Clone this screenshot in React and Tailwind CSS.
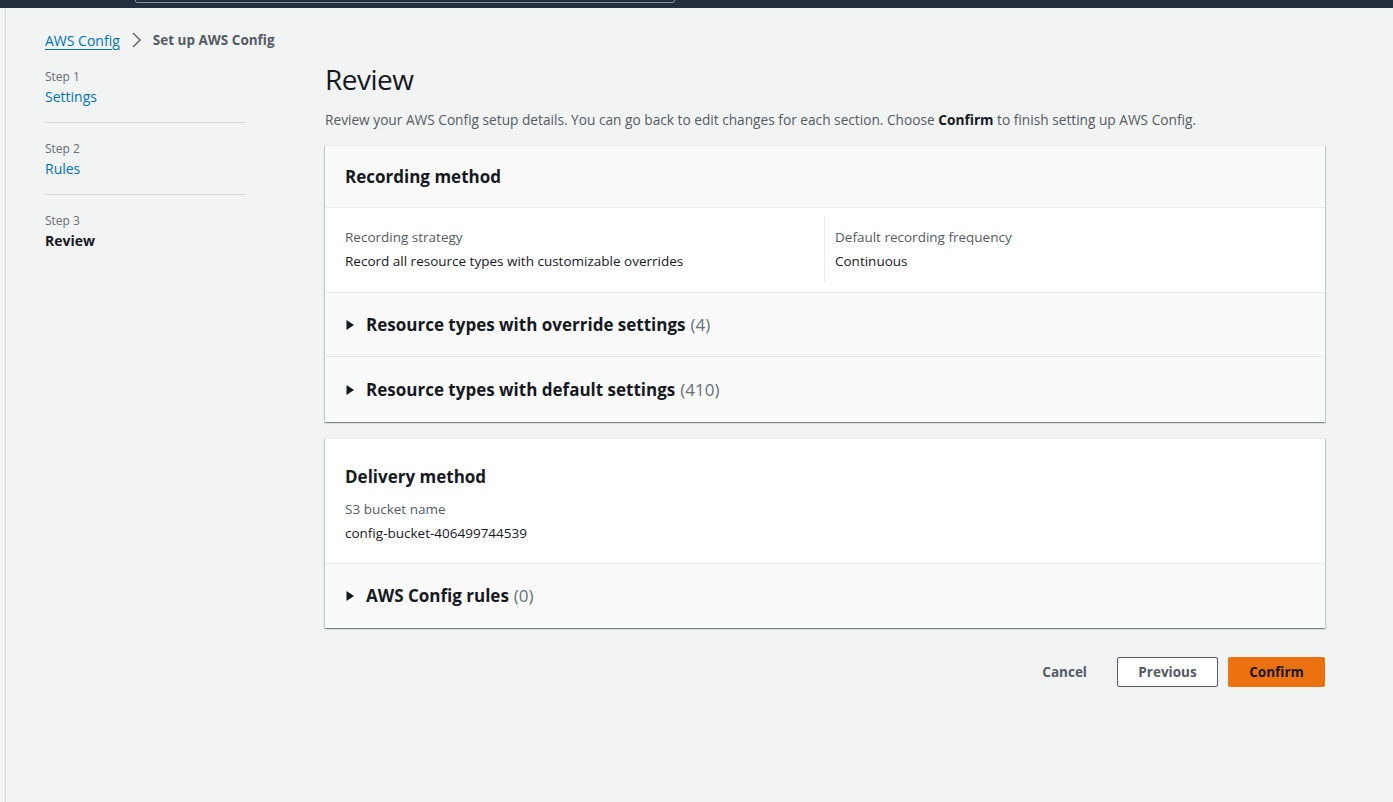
import React from 'react'

const font = { fontFamily: '"Open Sans", "Noto Sans", Arial, sans-serif' }

function Caret() {
  return (
    <svg width="10" height="12" viewBox="0 0 10 12" className="shrink-0">
      <path d="M1.5 1 L9 6 L1.5 11 Z" fill="#16191f" />
    </svg>
  )
}

function ExpandRow({ title, count, last, tall }) {
  return (
    <div className={`flex items-center ${tall ? 'h-[65px]' : 'h-[64px]'} px-5 bg-[#fafafa] ${last ? '' : 'border-b border-[#eaeded]'}`}>
      <Caret />
      <span className="ml-[11px] text-[17px] font-bold text-[#16191f]">{title}</span>
      <span className="ml-[5px] text-[17px] text-[#687078]">({count})</span>
    </div>
  )
}

function Step({ n, label, active, divider }) {
  return (
    <div className={`pb-[14px] mb-[17px] ${divider ? 'border-b border-[#d5dbdb]' : ''}`}>
      <div className="text-[12px] text-[#687078] leading-[18px]">Step {n}</div>
      {active ? (
        <div className="text-[14px] font-bold text-[#16191f] leading-[22px]">{label}</div>
      ) : (
        <div className="text-[14px] text-[#0073bb] leading-[22px]">{label}</div>
      )}
    </div>
  )
}

const cardShadow = 'shadow-[0_1px_1px_0_rgba(0,28,36,0.3),1px_1px_1px_0_rgba(0,28,36,0.15),-1px_1px_1px_0_rgba(0,28,36,0.15)]'

export default function App() {
  return (
    <div style={font} className="min-h-[802px] bg-[#f2f3f3] text-[#16191f] flex flex-col">
      <div className="h-[8px] bg-[#232f3e] relative">
        <div className="absolute left-[135px] w-[540px] top-[-4px] h-[7px] border border-[#879596] rounded-[2px]" />
      </div>
      <div className="flex-1 ml-[5px] border-l border-[#d5dbdb] pl-[39px] pr-[68px]">
        <div className="flex items-center h-[30px] mt-[17px] text-[14px]">
          <span className="text-[#0073bb] underline underline-offset-[3px]">AWS Config</span>
          <svg width="16" height="18" viewBox="0 0 16 18" className="ml-[8px] mr-[9px]">
            <path d="M5 2 L12 9 L5 16" fill="none" stroke="#687078" strokeWidth="1.7" />
          </svg>
          <span className="font-bold text-[#545b64] text-[13.5px]">Set up AWS Config</span>
        </div>
        <div className="flex">
          <div className="w-[200px] shrink-0 pt-[13px]">
            <Step n={1} label="Settings" divider />
            <Step n={2} label="Rules" divider />
            <Step n={3} label="Review" active />
          </div>
          <div className="ml-[80px] flex-1">
            <h1 className="text-[28px] leading-[36px] mt-[6px] text-[#16191f] tracking-[-0.5px]">Review</h1>
            <p className="text-[13.7px] text-[#545b64] mt-[13px] leading-[20px]">
              Review your AWS Config setup details. You can go back to edit changes for each section. Choose <b className="text-[#16191f]">Confirm</b> to finish setting up AWS Config.
            </p>
            <div className={`mt-[15px] bg-white border-t border-[#eaeded] ${cardShadow}`}>
              <div className="h-[62px] flex items-center px-5 bg-[#fafafa] border-b border-[#eaeded]">
                <h2 className="text-[17px] font-bold">Recording method</h2>
              </div>
              <div className="grid grid-cols-2 px-5 pt-[8px] pb-[10px] border-b border-[#eaeded]">
                <div className="border-r border-[#eaeded] py-[11px] pr-5">
                  <div className="text-[13.5px] text-[#545b64] leading-[20px]">Recording strategy</div>
                  <div className="text-[13.5px] leading-[20px] mt-[4px]">Record all resource types with customizable overrides</div>
                </div>
                <div className="py-[11px] pl-[10px]">
                  <div className="text-[13.5px] text-[#545b64] leading-[20px]">Default recording frequency</div>
                  <div className="text-[13.5px] leading-[20px] mt-[4px]">Continuous</div>
                </div>
              </div>
              <ExpandRow title="Resource types with override settings" count={4} />
              <ExpandRow title="Resource types with default settings" count={410} last tall />
            </div>
            <div className={`mt-[16px] bg-white border-t border-[#eaeded] ${cardShadow}`}>
              <div className="px-5 pt-[26px] pb-[20px] border-b border-[#eaeded]">
                <h2 className="text-[17px] font-bold leading-[24px]">Delivery method</h2>
                <div className="text-[13.5px] text-[#545b64] leading-[20px] mt-[10px]">S3 bucket name</div>
                <div className="text-[13.5px] leading-[20px] mt-[4px]">config-bucket-406499744539</div>
              </div>
              <ExpandRow title="AWS Config rules" count={0} last />
            </div>
            <div className="flex justify-end items-center mt-[29px] text-[13.5px] font-bold">
              <button className="px-5 h-[30px] text-[#545b64]">Cancel</button>
              <button className="ml-[10px] w-[101px] h-[30px] border border-[#545b64] rounded-[2px] bg-white text-[#545b64]">Previous</button>
              <button className="ml-[10px] w-[97px] h-[30px] rounded-[2px] bg-[#ec7211] text-[#16191f]">Confirm</button>
            </div>
          </div>
        </div>
      </div>
    </div>
  )
}
